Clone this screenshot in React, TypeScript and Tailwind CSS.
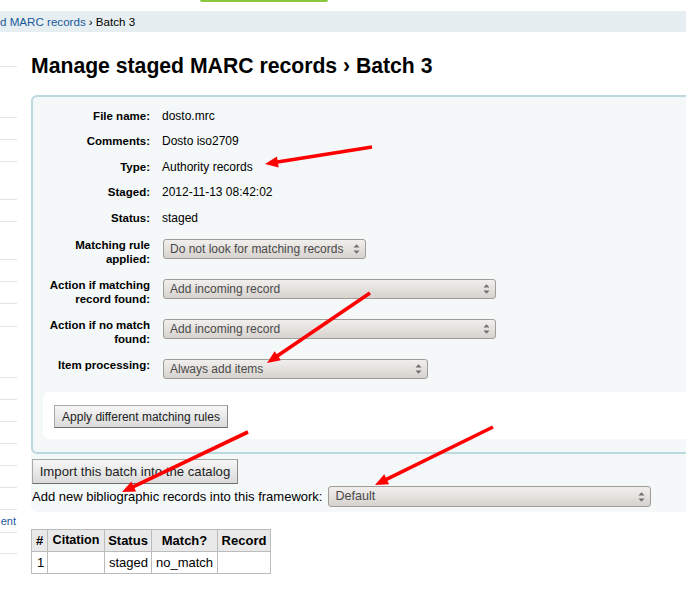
import { FunctionComponent } from "react";

type ArrowProps = { x1: number; y1: number; x2: number; y2: number };

// red annotation arrow, tail (x1,y1) to tip (x2,y2)
const Arrow: FunctionComponent<ArrowProps> = ({ x1, y1, x2, y2 }) => {
  const len = Math.hypot(x2 - x1, y2 - y1);
  const dx = (x2 - x1) / len;
  const dy = (y2 - y1) / len;
  const L = 13;
  const W = 5.5;
  const bx = x2 - dx * L;
  const by = y2 - dy * L;
  const pts = `${x2},${y2} ${bx - dy * W},${by + dx * W} ${bx + dy * W},${by - dx * W}`;
  return (
    <g>
      <line x1={x1} y1={y1} x2={bx + dx * 2} y2={by + dy * 2} stroke="#ff0000" strokeWidth={3.6} />
      <polygon points={pts} fill="#ff0000" />
    </g>
  );
};

const SelectBox: FunctionComponent<{ value: string; className?: string; textClass?: string }> = ({
  value,
  className = "",
  textClass = "text-[12px]",
}) => {
  return (
    <div
      className={`flex flex-row items-center justify-between rounded-[3px] border border-[#a09c98] bg-gradient-to-b from-[#f1efed] to-[#d6d2ce] pl-[6px] pr-[5px] text-[#4a4a4a] ${textClass} ${className}`}
    >
      <span className="whitespace-nowrap">{value}</span>
      <svg width="7" height="12" viewBox="0 0 7 12" className="shrink-0">
        <polygon points="0.5,4.5 3.5,1.2 6.5,4.5" fill="#707070" />
        <polygon points="0.5,7.5 3.5,10.8 6.5,7.5" fill="#707070" />
      </svg>
    </div>
  );
};

const sideRows = [
  "h-[35px]",
  "h-[51px]",
  "h-[22px]",
  "h-[22px]",
  "h-[38px]",
  "h-[22px]",
  "h-[38px]",
  "h-[22px]",
  "h-[22px]",
  "h-[23px]",
  "h-[51px]",
  "h-[22px]",
  "h-[22px]",
  "h-[22px]",
  "h-[22px]",
  "h-[22px]",
  "h-[22px]",
  "h-[23px]",
  "h-[21px]",
];

const infoRows = [
  ["File name:", "dosto.mrc"],
  ["Comments:", "Dosto iso2709"],
  ["Type:", "Authority records"],
  ["Staged:", "2012-11-13 08:42:02"],
  ["Status:", "staged"],
];

const labelCls = "w-[117px] shrink-0 text-right font-bold text-[11.5px] leading-[14px]";

const App: FunctionComponent = () => {
  return (
    <div className="relative w-[686px] h-[597px] overflow-hidden bg-white text-black font-['Liberation_Sans',Arial,sans-serif]">
      {/* top strip */}
      <div className="h-[11px]">
        <div className="ml-[200px] w-[128px] h-[2px] rounded-b-[2px] bg-[#8cc63f]" />
      </div>

      {/* breadcrumbs */}
      <div className="h-[21px] bg-[#e6eef1] flex flex-row items-center text-[11.6px] whitespace-nowrap">
        <a className="text-[#1a5a9c]">d MARC records</a>
        <span className="ml-[3px]">› Batch 3</span>
      </div>

      <div className="flex flex-row items-start">
        {/* sidebar */}
        <div className="w-[17px] shrink-0 flex flex-col">
          {sideRows.map((h, i) => (
            <div
              key={i}
              className={`${h} border-b border-[#e4e4e4] flex items-center justify-end text-[11px] text-[#1a5a9c]`}
            >
              {i === 17 ? <span className="mr-[1px] -mb-[1px]">ent</span> : null}
            </div>
          ))}
        </div>

        {/* main */}
        <div className="ml-[14px] w-[700px] shrink-0">
          <h1 className="mt-[21px] text-[21.2px] leading-[25px] font-bold whitespace-nowrap">
            Manage staged MARC records › Batch 3
          </h1>

          <div className="mt-[17px] bg-[#f4f8f9] rounded-[6px] pb-[5px]">
            <div className="border-2 border-[#bbd8dc] rounded-[6px] pt-[6px] pb-[13px]">
              {infoRows.map(([l, v]) => (
                <div key={l} className="h-[25.5px] flex flex-row items-center">
                  <div className={labelCls}>{l}</div>
                  <div className="ml-[12px] text-[12px]">{v}</div>
                </div>
              ))}

              <div className="flex flex-row items-start pt-[7px] pb-[5px]">
                <div className={labelCls}>
                  Matching rule
                  <br />
                  applied:
                </div>
                <SelectBox value="Do not look for matching records" className="ml-[13px] mt-[1px] h-[20px] w-[203px]" />
              </div>

              <div className="flex flex-row items-start pt-[7px] pb-[5px]">
                <div className={labelCls}>
                  Action if matching
                  <br />
                  record found:
                </div>
                <SelectBox value="Add incoming record" className="ml-[13px] mt-[1px] h-[20px] w-[333px]" />
              </div>

              <div className="flex flex-row items-start pt-[7px] pb-[5px]">
                <div className={labelCls}>
                  Action if no match
                  <br />
                  found:
                </div>
                <SelectBox value="Add incoming record" className="ml-[13px] mt-[1px] h-[20px] w-[333px]" />
              </div>

              <div className="flex flex-row items-start pt-[7px] pb-[5px]">
                <div className={labelCls}>Item processing:</div>
                <SelectBox value="Always add items" className="ml-[13px] mt-[1px] h-[20px] w-[265px]" />
              </div>

              <div className="mt-[8px] ml-[10px] bg-white rounded-[6px] pt-[12px] pb-[11px] pl-[11px]">
                <button className="w-[174px] h-[23px] border border-[#a8a8a8] border-b-[#6e6e6e] border-r-[#8a8a8a] bg-gradient-to-b from-[#f7f7f7] to-[#dadada] text-[12px] text-[#222]">
                  Apply different matching rules
                </button>
              </div>
            </div>

            <button className="mt-[5px] ml-[1px] w-[206px] h-[25px] border border-[#a8a8a8] border-b-[#6e6e6e] border-r-[#8a8a8a] bg-gradient-to-b from-[#f7f7f7] to-[#dadada] text-[13.2px] text-[#222]">
              Import this batch into the catalog
            </button>

            <div className="mt-[2px] h-[21px] flex flex-row items-center pl-[1px]">
              <span className="text-[13px] whitespace-nowrap">Add new bibliographic records into this framework:</span>
              <SelectBox value="Default" textClass="text-[12.6px]" className="ml-[6px] h-[21px] w-[323px]" />
            </div>
          </div>

          <table className="mt-[17px] border-collapse table-fixed w-[240px] text-[13px]">
            <colgroup>
              <col className="w-[16px]" />
              <col className="w-[57px]" />
              <col className="w-[47px]" />
              <col className="w-[66px]" />
              <col className="w-[53px]" />
            </colgroup>
            <thead>
              <tr className="bg-[#e9e9e9] h-[22px]">
                <th className="border border-[#bcbcbc] p-0 font-bold">#</th>
                <th className="border border-[#bcbcbc] p-0 font-bold text-[12.6px]">Citation</th>
                <th className="border border-[#bcbcbc] p-0 font-bold">Status</th>
                <th className="border border-[#bcbcbc] p-0 font-bold">Match?</th>
                <th className="border border-[#bcbcbc] p-0 font-bold">Record</th>
              </tr>
            </thead>
            <tbody>
              <tr className="h-[22px]">
                <td className="border border-[#bcbcbc] px-[5px] py-0">1</td>
                <td className="border border-[#bcbcbc] px-[5px] py-0"></td>
                <td className="border border-[#bcbcbc] px-[4px] py-0">staged</td>
                <td className="border border-[#bcbcbc] px-[4px] py-0">no_match</td>
                <td className="border border-[#bcbcbc] px-[5px] py-0"></td>
              </tr>
            </tbody>
          </table>
        </div>
      </div>

      {/* annotation arrows drawn over the page */}
      <svg className="absolute inset-0 pointer-events-none" width="686" height="597" viewBox="0 0 686 597">
        <Arrow x1={372} y1={147} x2={265} y2={164} />
        <Arrow x1={370} y1={293} x2={267} y2={363} />
        <Arrow x1={248} y1={432} x2={122} y2={492} />
        <Arrow x1={493} y1={427} x2={375} y2={485} />
      </svg>
    </div>
  );
};

export default App;
